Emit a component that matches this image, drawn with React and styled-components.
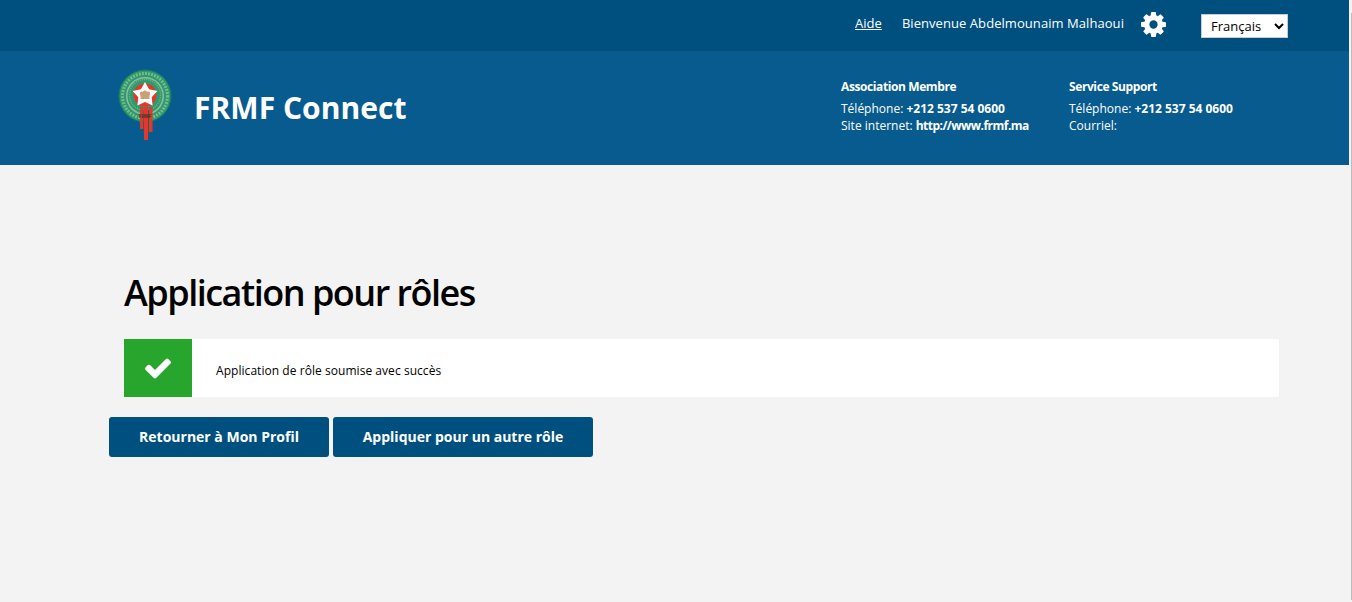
import React from 'react'
import styled, { createGlobalStyle } from 'styled-components'

const GlobalStyle = createGlobalStyle`
  html, body {
    margin: 0;
    padding: 0;
    height: 100%;
    overflow: hidden;
    background: #f3f3f3;
    font-family: "Open Sans", "Noto Sans", sans-serif;
  }
  #root { height: 100%; }
`

const Page = styled.div`
  width: 1349px;
  height: 602px;
  background: #f3f3f3;
`

const ScrollEdge = styled.div`
  position: fixed;
  top: 13px;
  right: 0;
  bottom: 2px;
  width: 1px;
  background: #bdbdbd;
`

const TopBar = styled.div`
  height: 51px;
  background: #00507f;
  display: flex;
  align-items: flex-start;
  justify-content: flex-end;
  padding-right: 61px;
  color: #fff;
  font-size: 13px;
`

const HelpLink = styled.a`
  color: #fff;
  text-decoration: underline;
  margin-top: 14px;
  line-height: 18px;
  margin-right: 20px;
`

const Welcome = styled.span`
  margin-top: 14px;
  line-height: 18px;
  margin-right: 15px;
  letter-spacing: 0.06px;
`

const GearWrap = styled.span`
  display: flex;
  margin-top: 10px;
  margin-right: 33px;
`

const LangSelect = styled.select`
  margin-top: 14px;
  width: 87px;
  height: 24px;
  border: 1px solid #ccc;
  background: #fff;
  color: #000;
  font-family: "Open Sans", sans-serif;
  font-size: 13px;
  padding: 0 0 0 5px;
  border-radius: 0;
`

const Banner = styled.header`
  height: 114px;
  background: #085b8e;
  display: flex;
  align-items: flex-start;
  color: #fff;
`

const Brand = styled.div`
  display: flex;
  align-items: center;
  margin-left: 117px;
  margin-top: 17px;
  width: 724px;
`

const BrandName = styled.h1`
  margin: 8px 0 0 21px;
  font-size: 30px;
  line-height: 40px;
  font-weight: 700;
  letter-spacing: 0.03px;
`

const Contact = styled.div`
  width: ${p => p.$width}px;
  margin-top: 27px;
  font-size: 12px;
  line-height: 17px;
`

const ContactTitle = styled.div`
  font-weight: 700;
  letter-spacing: -0.4px;
  margin-bottom: 4px;
  line-height: 18px;
`

const Strong = styled.b`
  font-weight: 700;
  letter-spacing: ${p => (p.$tight ? '-0.52px' : '0')};
`

const Main = styled.main`
  padding: 103px 70px 0 109px;
`

const Title = styled.h2`
  margin: 0 0 21px 15px;
  font-size: 36px;
  line-height: 50px;
  font-weight: 600;
  letter-spacing: -1.5px;
  color: #000;
`

const Alert = styled.div`
  display: flex;
  align-items: center;
  margin-left: 15px;
  height: 58px;
  background: #fff;
`

const AlertIcon = styled.div`
  width: 68px;
  height: 58px;
  background: #28a52c;
  display: flex;
  align-items: center;
  justify-content: center;
`

const AlertText = styled.p`
  margin: 6px 0 0 24px;
  font-size: 12px;
  line-height: 16px;
  letter-spacing: 0.05px;
  color: #000;
`

const Actions = styled.div`
  display: flex;
  gap: 4px;
  margin-top: 20px;
`

const Button = styled.button`
  width: ${p => p.$width}px;
  height: 40px;
  padding: 0 0 2px;
  border: 0;
  border-radius: 3px;
  background: #00507f;
  color: #fff;
  font-family: "Open Sans", sans-serif;
  font-size: 14px;
  font-weight: 700;
`

const Gear = () => (
  <svg width="29" height="29" viewBox="0 0 1792 1792" fill="#fff">
    <path d="M1152 896q0-106-75-181t-181-75-181 75-75 181 75 181 181 75 181-75 75-181zm512-109v222q0 12-8 23t-20 13l-185 28q-19 54-39 91 35 50 107 138 10 12 10 25t-9 23q-27 37-99 108t-94 71q-12 0-26-9l-138-108q-44 23-91 38-16 136-29 186-7 28-36 28h-222q-14 0-24.5-8.5t-11.5-21.5l-28-184q-49-16-90-37l-141 107q-10 9-25 9-14 0-25-11-126-114-165-168-7-10-7-23 0-12 8-23 15-21 51-66.5t54-70.5q-27-50-41-99l-183-27q-13-2-21-12.5t-8-23.5v-222q0-12 8-23t19-13l186-28q14-46 39-92-40-57-107-138-10-12-10-24 0-10 9-23 26-36 98.5-107.5t94.5-71.5q13 0 26 10l138 107q44-23 91-38 16-136 29-186 7-28 36-28h222q14 0 24.5 8.5t11.5 21.5l28 184q49 16 90 37l142-107q9-9 24-9 13 0 25 10 129 119 165 170 7 8 7 22 0 12-8 23-15 21-51 66.5t-54 70.5q26 50 41 98l183 28q13 2 21 12.5t8 23.5z" />
  </svg>
)

const Check = () => (
  <svg width="30" height="30" viewBox="0 0 1792 1792" fill="#fff">
    <path d="M1671 566q0 40-28 68l-724 724-136 136q-28 28-68 28t-68-28l-136-136-362-362q-28-28-28-68t28-68l136-136q28-28 68-28t68 28l294 295 656-657q28-28 68-28t68 28l136 136q28 28 28 68z" />
  </svg>
)

const Logo = () => (
  <svg width="56" height="72" viewBox="0 0 56 72">
    <circle cx="28" cy="28" r="26" fill="#2f9a6d" stroke="#1c7a62" strokeWidth="1" />
    <circle cx="28" cy="28" r="22.500" fill="none" stroke="#7dbb8f" strokeWidth="3" strokeDasharray="1.800 1.300" />
    <circle cx="28" cy="28" r="19" fill="#8cbf9c" />
    <circle cx="28" cy="28" r="17.500" fill="#2f9a6d" />
    <circle cx="28" cy="27" r="15.500" fill="none" stroke="#6fae86" strokeWidth="1.400" strokeDasharray="1.200 0.900" />
    <circle cx="28" cy="27" r="11.500" fill="#e5352d" />
    <path d="M28 14l4.100 7.300 8.300 1.700-5.700 6.200 0.900 8.300-7.600-3.500-7.600 3.500 0.900-8.300-5.700-6.200 8.300-1.700z" fill="#fff" />
    <path d="M23.500 31v-3.500c-2-2.500 0.500-5 2.500-3.500 0.500-2 3.500-2 4 0 2-1.500 4.500 1 2.500 3.500v3.500z" fill="#c8a377" />
    <path d="M23 39h3.500v22H23zM27 39h4v33h-4zM32 39h3.500v25H32z" fill="#e5352d" />
    <path d="M26.500 42h0.500v24h-0.500zM31 42h1v24h-1z" fill="#146b52" />
    <text x="28" y="50" fontSize="4.500" fontWeight="700" fontFamily="Liberation Sans, sans-serif" textAnchor="middle" fill="#3f3428">FRMF</text>
  </svg>
)

export default function App() {
  return (
    <>
      <GlobalStyle />
      <Page>
        <TopBar>
          <HelpLink href="#">Aide</HelpLink>
          <Welcome>Bienvenue Abdelmounaim Malhaoui</Welcome>
          <GearWrap><Gear /></GearWrap>
          <LangSelect defaultValue="fr">
            <option value="fr">Français</option>
            <option value="en">English</option>
          </LangSelect>
        </TopBar>
        <Banner>
          <Brand>
            <Logo />
            <BrandName>FRMF Connect</BrandName>
          </Brand>
          <Contact $width={228}>
            <ContactTitle>Association Membre</ContactTitle>
            <div>Téléphone: <Strong>+212 537 54 0600</Strong></div>
            <div>Site internet: <Strong $tight>http://www.frmf.ma</Strong></div>
          </Contact>
          <Contact $width={200}>
            <ContactTitle>Service Support</ContactTitle>
            <div>Téléphone: <Strong>+212 537 54 0600</Strong></div>
            <div>Courriel:</div>
          </Contact>
        </Banner>
        <Main>
          <Title>Application pour rôles</Title>
          <Alert>
            <AlertIcon><Check /></AlertIcon>
            <AlertText>Application de rôle soumise avec succès</AlertText>
          </Alert>
          <Actions>
            <Button $width={220}>Retourner à Mon Profil</Button>
            <Button $width={260}>Appliquer pour un autre rôle</Button>
          </Actions>
        </Main>
        <ScrollEdge />
      </Page>
    </>
  )
}
